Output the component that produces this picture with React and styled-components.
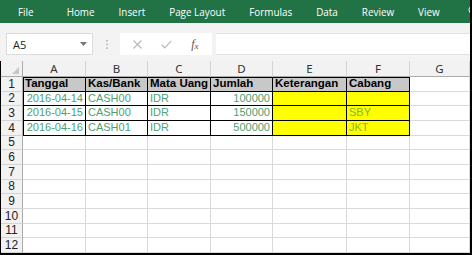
import React from 'react';
import styled, { createGlobalStyle } from 'styled-components';

const Global = createGlobalStyle`
  html, body { margin: 0; padding: 0; background: #fff; }
  body { width: 472px; height: 255px; overflow: hidden; }
`;

const Frame = styled.div`
  width: 472px;
  height: 255px;
  box-sizing: border-box;
  border-right: 2px solid #000;
  display: flex;
  flex-direction: column;
  overflow: hidden;
`;

const Ribbon = styled.div`
  height: 23px;
  flex: none;
  background: #217346;
  display: flex;
  align-items: center;
  padding-left: 18px;
  gap: 24px;
  font-family: "Open Sans", "Noto Sans", sans-serif;
  font-size: 9.9px;
  color: #fff;
  overflow: hidden;
`;

const Tab = styled.span`
  flex: none;
  white-space: nowrap;
  margin-right: ${p => (p.$extra ? '9px' : '0')};
`;

const Bulb = styled.svg`
  flex: none;
  width: 10px;
  height: 14px;
  margin-left: 4px;
`;

const FormulaArea = styled.div`
  height: 38px;
  flex: none;
  box-sizing: border-box;
  background: #f3f3f3;
  padding: 10px 0 6px 6px;
  display: flex;
  align-items: stretch;
`;

const NameBox = styled.div`
  width: 87px;
  box-sizing: border-box;
  background: #fff;
  border: 1px solid #dcdcdc;
  display: flex;
  align-items: center;
  justify-content: space-between;
  padding: 0 5px 0 6px;
  font-family: "Open Sans", "Noto Sans", sans-serif;
  font-size: 11px;
  color: #222;
`;

const Grip = styled.div`
  width: 27px;
  display: flex;
  align-items: center;
  justify-content: center;
`;

const FxButtons = styled.div`
  width: 92px;
  background: #fff;
  display: flex;
  align-items: center;
  justify-content: space-around;
  padding: 0 4px;
  box-sizing: border-box;
`;

const FxLabel = styled.span`
  font-family: "Liberation Serif", "DejaVu Serif", serif;
  font-style: italic;
  font-size: 12px;
  color: #555;
`;

const FormulaInput = styled.div`
  flex: 1;
  margin-left: 4px;
  background: #fff;
  border-top: 1px solid #e2e2e2;
  border-bottom: 1px solid #e2e2e2;
`;

const Sheet = styled.div`
  flex: 1;
  box-sizing: border-box;
  border-left: 1px solid #000;
  border-bottom: 2px solid #000;
  display: grid;
  grid-template-columns: 22px 63px 62px 63px 62px 74px 63px 1fr;
  grid-template-rows: 16px repeat(12, 14.67px);
  overflow: hidden;
`;

const ColHead = styled.div`
  background: #f2f2f2;
  border-right: 1px solid #d4d4d4;
  border-bottom: 1px solid #ababab;
  display: flex;
  align-items: center;
  justify-content: center;
  font-family: "Noto Sans", "Open Sans", sans-serif;
  font-size: 11.5px;
  color: #333;
  box-sizing: border-box;
`;

const Corner = styled(ColHead)`
  justify-content: flex-end;
  align-items: flex-end;
  padding: 0 3px 2px 0;
  border-right-color: #ababab;
`;

const RowHead = styled.div`
  background: #f2f2f2;
  border-right: 1px solid #ababab;
  border-bottom: 1px solid #d4d4d4;
  display: flex;
  align-items: center;
  justify-content: center;
  font-family: "Liberation Sans", Arial, sans-serif;
  font-size: 12px;
  color: #222;
  box-sizing: border-box;
`;

const Cell = styled.div`
  box-sizing: border-box;
  background: ${p => p.$fill || '#fff'};
  border-right: 1px solid ${p => (p.$boxed ? '#000' : '#dadada')};
  border-bottom: 1px solid ${p => (p.$boxed ? '#000' : '#dadada')};
  box-shadow: ${p =>
    [p.$top ? 'inset 0 1px 0 #000' : null, p.$left ? 'inset 1px 0 0 #000' : null]
      .filter(Boolean)
      .join(', ') || 'none'};
  display: flex;
  align-items: flex-end;
  justify-content: ${p => (p.$right ? 'flex-end' : 'flex-start')};
  padding: 0 2px 0 2px;
  font-family: "Liberation Sans", Arial, sans-serif;
  font-size: ${p => (p.$bold ? '11.5px' : '11px')};
  line-height: 13.5px;
  font-weight: ${p => (p.$bold ? 700 : 400)};
  color: ${p => p.$color || '#000'};
  white-space: nowrap;
  overflow: visible;
`;

const GREEN = '#4d9f73';
const OLIVE = '#86b43a';
const GRAY = '#c8c8c8';
const YELLOW = '#ffff00';

const tabs = ['File', 'Home', 'Insert', 'Page Layout', 'Formulas', 'Data', 'Review', 'View'];
const cols = ['A', 'B', 'C', 'D', 'E', 'F', 'G'];

const data = [
  ['Tanggal', 'Kas/Bank', 'Mata Uang', 'Jumlah', 'Keterangan', 'Cabang'],
  ['2016-04-14', 'CASH00', 'IDR', '100000', '', ''],
  ['2016-04-15', 'CASH00', 'IDR', '150000', '', 'SBY'],
  ['2016-04-16', 'CASH01', 'IDR', '500000', '', 'JKT'],
];

function cellProps(r, c) {
  if (r >= 4 || c >= 6) return {};
  const base = { $boxed: true, $top: r === 0, $left: c === 0 };
  if (r === 0) return { ...base, $fill: GRAY, $bold: true };
  const right = c === 0 || c === 3;
  const fill = c >= 4 ? YELLOW : '#fff';
  const color = c === 5 ? OLIVE : GREEN;
  return { ...base, $fill: fill, $right: right, $color: color };
}

export default function App() {
  const rows = Array.from({ length: 12 }, (_, i) => i);
  return (
    <Frame>
      <Global />
      <Ribbon>
        {tabs.map((t, i) => (
          <Tab key={t} $extra={i === 0}>{t}</Tab>
        ))}
        <Bulb viewBox="0 0 10 14">
          <path d="M5 1 C2.5 1 1 2.8 1 4.8 C1 6.6 2.4 7.4 2.8 9 L7.2 9 C7.6 7.4 9 6.6 9 4.8 C9 2.8 7.5 1 5 1 Z" fill="none" stroke="#fff" strokeWidth="1" />
          <path d="M3 10.5 H7 M3.5 12 H6.5" stroke="#fff" strokeWidth="1" />
        </Bulb>
      </Ribbon>
      <FormulaArea>
        <NameBox>
          <span>A5</span>
          <svg width="7" height="4" viewBox="0 0 7 4">
            <path d="M0 0 H7 L3.5 4 Z" fill="#777" />
          </svg>
        </NameBox>
        <Grip>
          <svg width="2" height="9" viewBox="0 0 2 9">
            <rect x="0" y="0" width="2" height="1.5" fill="#bbb" />
            <rect x="0" y="3.7" width="2" height="1.5" fill="#bbb" />
            <rect x="0" y="7.4" width="2" height="1.5" fill="#bbb" />
          </svg>
        </Grip>
        <FxButtons>
          <svg width="9" height="9" viewBox="0 0 9 9">
            <path d="M0.5 0.5 L8.5 8.5 M8.5 0.5 L0.5 8.5" stroke="#b9b9b9" strokeWidth="1.1" />
          </svg>
          <svg width="11" height="9" viewBox="0 0 11 9">
            <path d="M0.7 4.8 L3.8 7.8 L10.3 0.8" fill="none" stroke="#b9b9b9" strokeWidth="1.2" />
          </svg>
          <FxLabel>f<sub style={{ fontSize: '9px', verticalAlign: '-1px' }}>x</sub></FxLabel>
        </FxButtons>
        <FormulaInput />
      </FormulaArea>
      <Sheet>
        <Corner>
          <svg width="7" height="7" viewBox="0 0 7 7">
            <path d="M7 0 V7 H0 Z" fill="#c6c6c6" />
          </svg>
        </Corner>
        {cols.map(c => (
          <ColHead key={c}>{c}</ColHead>
        ))}
        {rows.map(r => (
          <React.Fragment key={r}>
            <RowHead>{r + 1}</RowHead>
            {cols.map((c, ci) => (
              <Cell key={c} {...cellProps(r, ci)}>
                {(data[r] && data[r][ci]) || ''}
              </Cell>
            ))}
          </React.Fragment>
        ))}
      </Sheet>
    </Frame>
  );
}
